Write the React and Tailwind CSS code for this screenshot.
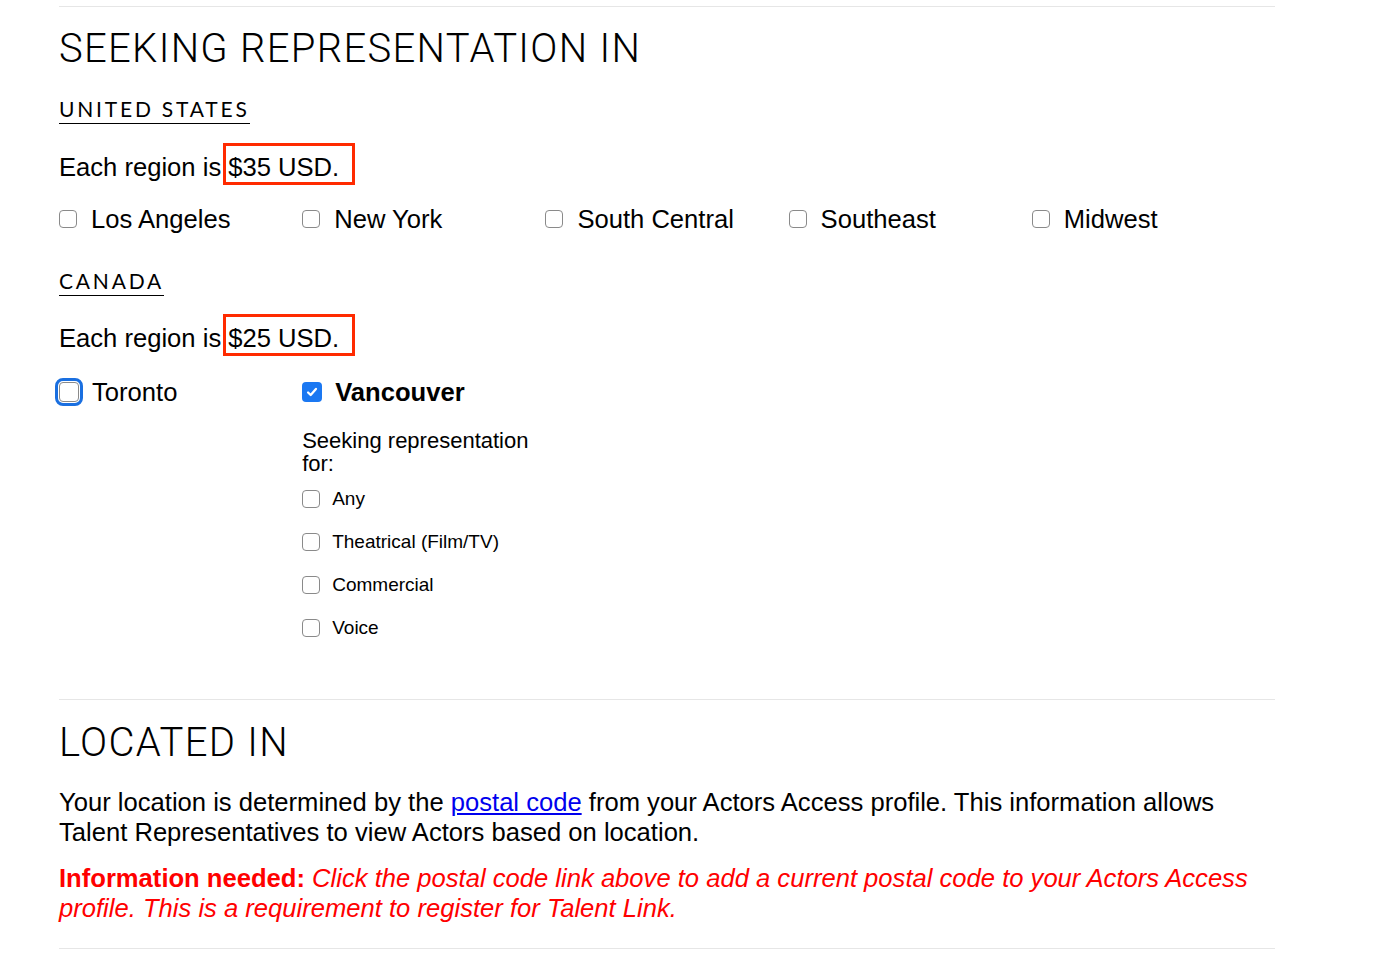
import React, { useState } from "react";

const SANS = { fontFamily: '"Liberation Sans", Arial, sans-serif' };
const THIN = { fontFamily: 'Roboto, "Liberation Sans", sans-serif' };
const CAPS = { fontFamily: 'Lato, "Liberation Sans", sans-serif' };

const Box = ({ checked, focused }) => {
  if (checked) {
    return (
      <span className="w-[20px] h-[20px] shrink-0 rounded-[4px] bg-[#1b78f2] flex items-center justify-center">
        <svg viewBox="0 0 16 16" className="w-[14px] h-[14px]" fill="none" stroke="white" strokeWidth="2.6" strokeLinecap="round" strokeLinejoin="round">
          <path d="M3.5 8.5l3 3 6-7" />
        </svg>
      </span>
    );
  }
  if (focused) {
    return (
      <span className="block w-[20px] h-[20px] shrink-0 rounded-[4px] border border-[#8a8a8a] bg-white outline-[3px] outline-solid outline-[#1a6fe0] outline-offset-[1px]" />
    );
  }
  return <span className="w-[18px] h-[18px] shrink-0 rounded-[4px] border border-[#8a8a8a] bg-white" />;
};

const Region = ({ label, checked, focused, bold }) => (
  <label className={`flex items-center h-[30px] cursor-pointer ${focused || checked ? "gap-[13px]" : "gap-[14px]"}`}>
    <Box checked={checked} focused={focused} />
    <span className={`text-[25.6px] leading-[30px] text-black ${bold ? "font-bold" : ""}`}>{label}</span>
  </label>
);

const SubOption = ({ label }) => (
  <label className="flex items-center gap-[12px] h-[24px]">
    <Box />
    <span className="text-[19px] leading-[24px] text-black">{label}</span>
  </label>
);

const Price = ({ amount }) => (
  <p className="text-[25.6px] leading-[24px] text-black flex items-center">
    <span className="pt-[6px]">Each region is</span>
    <span className="ml-[2px] border-[3px] border-[#ff2a00] pl-[2px] pr-[13px] pt-[9px] pb-[3px] leading-[24px]">{amount}</span>
  </p>
);

const Country = ({ children }) => (
  <h3 className="inline-block text-[21px] leading-[28px] tracking-[2.8px] text-black border-b border-black" style={CAPS}>
    {children}
  </h3>
);

export default function App() {
  const [subs] = useState(["Any", "Theatrical (Film/TV)", "Commercial", "Voice"]);

  return (
    <div className="bg-white min-h-[966px] pt-[6px]" style={SANS}>
      <div className="ml-[59px] w-[1216px]">
        <section className="border-t border-[#e6e6e6] pt-[18px] flex flex-col">
          <h2 className="text-[40px] leading-[48px] font-light tracking-[1.3px] text-black" style={THIN}>
            SEEKING REPRESENTATION IN
          </h2>

          <div className="mt-[22px]">
            <Country>UNITED STATES</Country>
          </div>
          <div className="mt-[19px]">
            <Price amount="$35 USD." />
          </div>
          <div className="mt-[19px] grid grid-cols-5">
            <Region label="Los Angeles" />
            <Region label="New York" />
            <Region label="South Central" />
            <Region label="Southeast" />
            <Region label="Midwest" />
          </div>

          <div className="mt-[33px]">
            <Country>CANADA</Country>
          </div>
          <div className="mt-[18px]">
            <Price amount="$25 USD." />
          </div>
          <div className="mt-[21px] grid grid-cols-5 pb-[59px]">
            <div>
              <Region label="Toronto" focused />
            </div>
            <div className="flex flex-col">
              <Region label="Vancouver" checked bold />
              <p className="mt-[22px] text-[22px] leading-[23px] text-black w-[240px]">
                Seeking representation for:
              </p>
              <div className="mt-[12px] flex flex-col gap-[19px]">
                {subs.map((s) => (
                  <SubOption key={s} label={s} />
                ))}
              </div>
            </div>
          </div>
        </section>

        <section className="border-t border-[#e6e6e6] pt-[19px] pb-[25px] border-b">
          <h2 className="text-[40px] leading-[48px] font-light tracking-[1.3px] text-black" style={THIN}>
            LOCATED IN
          </h2>
          <p className="mt-[20px] text-[25.6px] leading-[30px] text-black pr-[20px]">
            Your location is determined by the{" "}
            <a href="#" className="text-[#0000ee] underline">
              postal code
            </a>{" "}
            from your Actors Access profile. This information allows Talent Representatives to view Actors based on location.
          </p>
          <p className="mt-[16px] text-[25.6px] leading-[30px] text-[#ff0000] pr-[10px]">
            <strong className="font-bold">Information needed: </strong>
            <em>
              Click the postal code link above to add a current postal code to your Actors Access profile. This is a
              requirement to register for Talent Link.
            </em>
          </p>
        </section>
      </div>
    </div>
  );
}
